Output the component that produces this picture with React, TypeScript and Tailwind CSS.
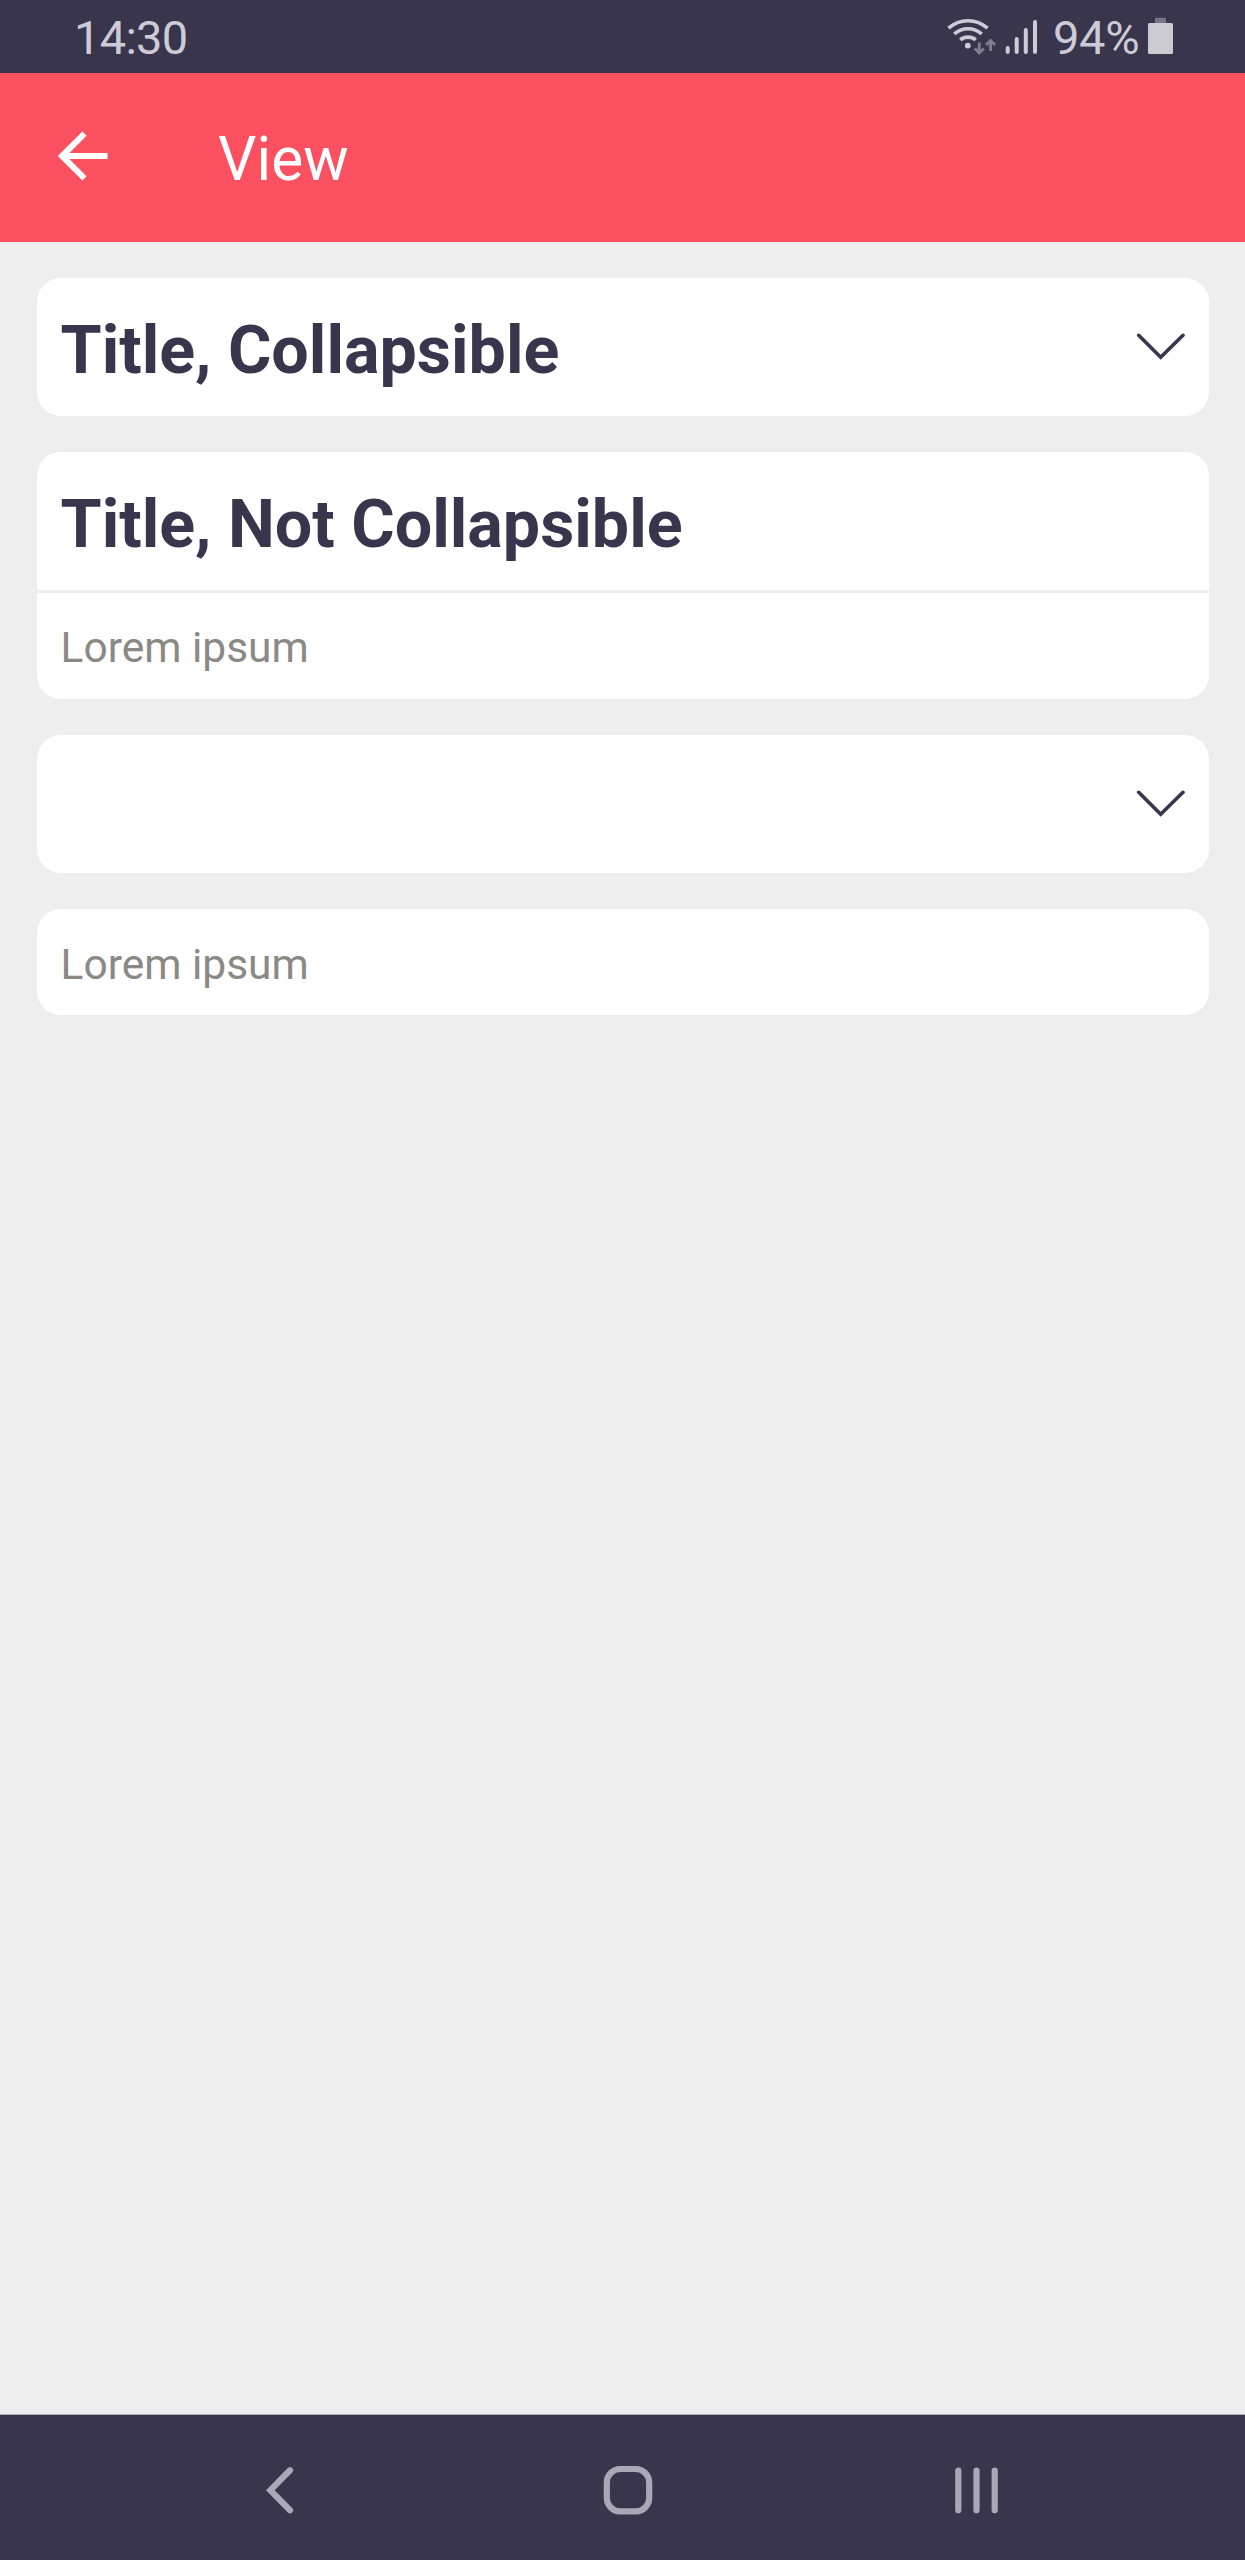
import type { ReactNode } from 'react'

interface Card {
  id: number
  title?: string
  collapsible?: boolean
  body?: string
}

const cards: Card[] = [
  { id: 1, title: 'Title, Collapsible', collapsible: true },
  { id: 2, title: 'Title, Not Collapsible', body: 'Lorem ipsum' },
  { id: 3, title: '', collapsible: true },
  { id: 4, body: 'Lorem ipsum' }
]

const WifiIcon = () => (
  <svg
    className="h-[40px] w-[50px]"
    viewBox="945 16 50 40"
    fill="none"
    strokeWidth="3.6"
    strokeLinecap="butt"
  >
    <g stroke="#cdcbd6">
      <path d="M947.5 27.2C958.5 17.2 975.5 17.2 986.5 27.2" />
      <path d="M953.3 33C961 26 973 26 980.7 33" />
      <path d="M959.3 39C963.5 35.2 970.5 35.2 974.7 39" />
    </g>
    <circle cx="966.8" cy="44.6" r="2.9" fill="#cdcbd6" />
    <g stroke="#817e92" strokeWidth="2.8">
      <path d="M978.3 41.5V52M973.8 47.5L978.3 52L982.8 47.5" />
      <path d="M989.6 50V39.5M985.1 44L989.6 39.5L994.1 44" />
    </g>
  </svg>
)

const SignalIcon = () => (
  <svg
    className="h-[36px] w-[33px]"
    viewBox="1004 19 33 36"
    stroke="#cdcbd6"
    strokeWidth="4"
    strokeLinecap="round"
  >
    <path d="M1006.7 48V52M1015.7 39V52M1024.8 30V52M1034 22V52" />
  </svg>
)

const BatteryIcon = () => (
  <svg className="mb-[3px] h-[37px] w-[25px]" viewBox="0 0 25 37">
    <rect x="7" y="0.7" width="11" height="6" rx="1" fill="#777489" />
    <rect y="6" width="25" height="31" rx="1.5" fill="#cdcbd2" />
  </svg>
)

const StatusBar = () => (
  <div className="flex h-[73px] items-center justify-between bg-[#38354d] pt-px pr-[72px] pl-[74px] text-[47px] leading-none text-[#cdcbd6]">
    <span className="tracking-[-0.7px]">14:30</span>
    <div className="flex items-center">
      <WifiIcon />
      <span className="ml-[9px] flex">
        <SignalIcon />
      </span>
      <span className="ml-[15px] w-[95px] tracking-[-0.3px]">94%</span>
      <BatteryIcon />
    </div>
  </div>
)

const Header = () => (
  <header className="flex h-[169px] items-center bg-[#fb5060] pl-[58px] text-white">
    <svg
      className="-mt-[3px] h-[50px] w-[50px]"
      viewBox="58 131 50 50"
      fill="none"
      stroke="currentColor"
      strokeWidth="6"
    >
      <path d="M107.5 156H62M84.5 133.7L62 156L84.5 178.3" />
    </svg>
    <h1 className="mt-[6px] ml-[110px] text-[60.4px] leading-none">View</h1>
  </header>
)

const Chevron = () => (
  <svg
    className="-mt-[2px] h-[28px] w-[49px]"
    viewBox="1136 332 49 28"
    fill="none"
    stroke="#38354d"
    strokeWidth="3.6"
    strokeLinecap="round"
  >
    <path d="M1138.7 335.3L1160.7 357.3L1183 335.3" />
  </svg>
)

const CardView = ({ title, collapsible, body }: Card) => (
  <section className="overflow-hidden rounded-[24px] bg-white">
    {title !== undefined && (
      <div className="flex h-[137.8px] items-center justify-between px-[24px]">
        <h2 className="mt-[7px] text-[66.4px] leading-none font-bold text-[#38354d]">
          {title}
        </h2>
        {collapsible && <Chevron />}
      </div>
    )}
    {body && (
      <div
        className={
          title ? 'border-t-[3px] border-[#eeeeee]' : undefined
        }
      >
        <p className="flex h-[105.8px] items-center pt-[5px] pl-[24px] text-[42.5px] leading-none text-[#8b8984]">
          {body}
        </p>
      </div>
    )}
  </section>
)

const NavButton = ({ label, children }: { label: string; children: ReactNode }) => (
  <button className="flex w-[348px] justify-center" aria-label={label}>
    <svg
      className="size-[50px]"
      viewBox="0 0 50 50"
      fill="none"
      stroke="#aaa8b7"
      strokeWidth="6.2"
      strokeLinecap="round"
    >
      {children}
    </svg>
  </button>
)

const NavBar = () => (
  <nav className="flex h-[146px] items-center justify-center border-t border-[#aeadb8] bg-[#38354d] pt-[5px] pl-[11px]">
    <NavButton label="Back">
      <path d="M35 5.3L15.3 25.3L35 45.3" />
    </NavButton>
    <NavButton label="Home">
      <rect x="3.8" y="4" width="42.4" height="42.4" rx="13.5" />
    </NavButton>
    <NavButton label="Recents">
      <path d="M7.3 5.5V45.2M25.5 5.5V45.2M43.7 5.5V45.2" />
    </NavButton>
  </nav>
)

export default function App() {
  return (
    <div className="flex h-[2560px] w-[1245px] flex-col bg-[#eeeeee] font-['Roboto',sans-serif]">
      <StatusBar />
      <Header />
      <main className="flex flex-1 flex-col gap-[36.4px] px-[36.5px] pt-[36px]">
        {cards.map((card) => (
          <CardView key={card.id} {...card} />
        ))}
      </main>
      <NavBar />
    </div>
  )
}
